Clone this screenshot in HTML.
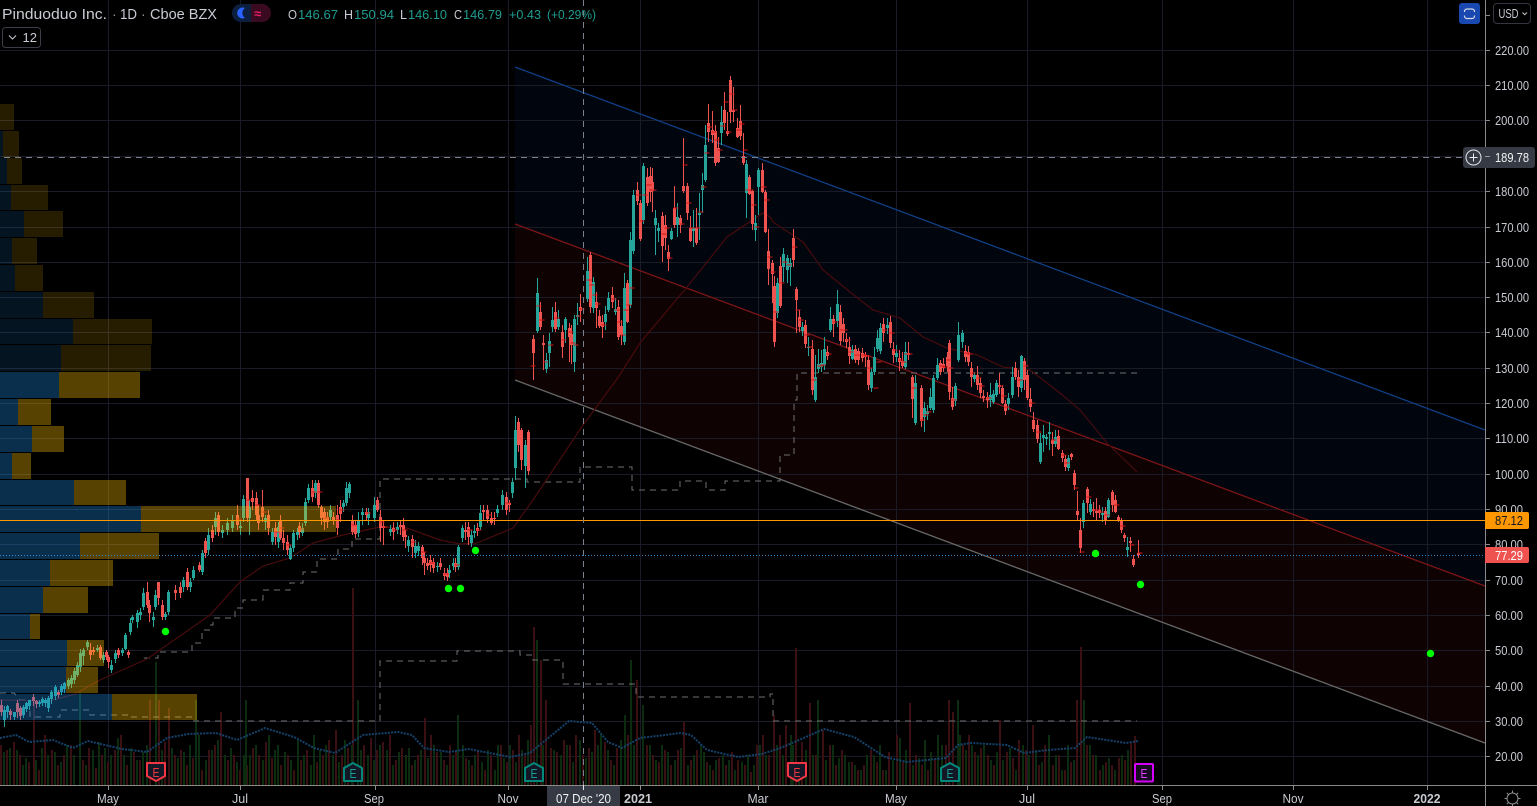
<!DOCTYPE html>
<html><head><meta charset="utf-8"><title>Pinduoduo Inc.</title>
<style>html,body{margin:0;padding:0;background:#000;overflow:hidden}svg{display:block}text{font-family:"Liberation Sans",sans-serif}</style></head>
<body>
<svg xmlns="http://www.w3.org/2000/svg" width="1537" height="806" viewBox="0 0 1537 806">
<rect width="1537" height="806" fill="#000"/>
<polygon points="515,67 1485,430 1485,586 515,224" fill="#01060e"/>
<polygon points="515,224 1485,586 1485,743 515,380" fill="#0f0203"/>
<g stroke="#1a1b26" stroke-width="1" shape-rendering="crispEdges">
<path d="M0 50.5H1485M0 85.5H1485M0 120.5H1485M0 156.5H1485M0 191.5H1485M0 227.5H1485M0 262.5H1485M0 297.5H1485M0 332.5H1485M0 368.5H1485M0 403.5H1485M0 438.5H1485M0 474.5H1485M0 509.5H1485M0 544.5H1485M0 580.5H1485M0 615.5H1485M0 650.5H1485M0 686.5H1485M0 721.5H1485M0 756.5H1485"/>
<path d="M108.5 0V785M240.5 0V785M375.5 0V785M508.5 0V785M640.5 0V785M758.5 0V785M896.5 0V785M1027.5 0V785M1162.5 0V785M1293.5 0V785M1427.5 0V785"/>
</g>
<!-- volume -->
<g transform="translate(1 0)" fill="none" stroke-width="2" shape-rendering="crispEdges">
<path stroke="#3a1012" d="M0 745V785M6 750V785M13 742V785M19 755V785M28 762V785M33 700V785M38 770V785M44 735V785M51 750V785M57 765V785M63 755V785M70 745V785M82 760V785M88 748V785M95 768V785M101 755V785M107 762V785M114 750V785M120 735V785M126 765V785M133 752V785M139 760V785M149 700V785M158 700V785M164 742V785M168 708V785M174 755V785M180 750V785M186 765V785M192 758V785M201 770V785M208 750V785M214 745V785M220 712V785M227 760V785M233 755V785M239 770V785M246 765V785M252 748V785M258 755V785M265 742V785M271 758V785M280 765V785M287 755V785M293 770V785M300 760V785M306 750V785M316 762V785M322 755V785M328 740V785M335 730V785M341 755V785M347 748V785M352 588V785M363 745V785M370 738V785M376 750V785M382 742V785M389 735V785M395 760V785M401 748V785M411 765V785M417 755V785M424 718V785M430 735V785M436 752V785M443 760V785M449 745V785M455 750V785M465 758V785M471 765V785M477 750V785M484 770V785M490 755V785M500 745V785M506 762V785M512 750V785M518 735V785M524 755V785M530 725V785M533 627V785M540 660V785M545 700V785M550 748V785M556 752V785M563 740V785M569 745V785M575 735V785M582 755V785M588 748V785M594 730V785M604 742V785M610 760V785M616 748V785M627 735V785M636 680V785M646 745V785M652 755V785M658 762V785M664 750V785M670 765V785M677 750V785M683 722V785M690 760V785M696 750V785M706 762V785M712 770V785M718 758V785M725 765V785M731 752V785M737 760V785M744 765V785M750 772V785M756 745V785M762 735V785M768 755V785M773 715V785M779 735V785M785 725V785M795 648V785M801 742V785M809 703V785M815 755V785M822 730V785M829 745V785M835 765V785M841 750V785M851 762V785M857 770V785M863 765V785M870 750V785M876 762V785M882 770V785M888 752V785M896 735V785M902 762V785M909 703V785M915 755V785M921 765V785M927 770V785M934 758V785M945 745V785M948 700V785M952 712V785M962 745V785M968 735V785M974 752V785M980 748V785M987 755V785M993 765V785M999 720V785M1006 752V785M1012 758V785M1018 740V785M1025 750V785M1032 725V785M1038 765V785M1044 745V785M1052 765V785M1058 755V785M1064 770V785M1070 762V785M1076 700V785M1080 647V785M1086 745V785M1092 755V785M1099 770V785M1105 762V785M1111 765V785M1118 758V785M1124 760V785M1130 742V785M1134 736V785"/>
<path stroke="#0c2c10" d="M3 752V785M9 748V785M16 750V785M22 765V785M25 758V785M35 760V785M41 748V785M47 755V785M54 752V785M60 762V785M66 745V785M73 755V785M79 693V785M85 765V785M92 750V785M98 742V785M104 748V785M110 755V785M117 738V785M123 755V785M130 748V785M136 760V785M142 752V785M146 745V785M155 662V785M161 750V785M171 748V785M177 758V785M183 752V785M189 745V785M195 700V785M198 735V785M205 760V785M211 750V785M217 740V785M224 755V785M230 748V785M236 762V785M243 755V785M245 700V785M249 755V785M255 745V785M262 760V785M268 735V785M274 750V785M277 745V785M284 752V785M290 760V785M297 740V785M303 755V785M310 765V785M313 735V785M319 750V785M325 745V785M332 755V785M338 762V785M344 740V785M351 745V785M357 700V785M360 750V785M367 755V785M373 760V785M379 745V785M386 750V785M392 765V785M398 752V785M405 755V785M408 748V785M414 760V785M420 750V785M427 758V785M433 745V785M440 752V785M446 765V785M452 755V785M457 715V785M462 745V785M468 760V785M474 755V785M481 762V785M487 750V785M494 770V785M497 745V785M503 758V785M509 745V785M515 762V785M521 750V785M527 740V785M536 640V785M542 745V785M553 750V785M560 755V785M566 745V785M572 762V785M579 740V785M585 758V785M591 752V785M597 745V785M600 735V785M607 750V785M613 765V785M620 740V785M624 715V785M630 660V785M633 745V785M642 705V785M649 745V785M655 760V785M661 745V785M667 752V785M674 760V785M680 748V785M687 765V785M693 755V785M700 745V785M703 752V785M709 765V785M715 760V785M722 755V785M728 760V785M734 770V785M741 762V785M747 755V785M753 765V785M759 745V785M765 755V785M776 745V785M782 755V785M790 735V785M792 745V785M798 765V785M805 750V785M812 755V785M817 700V785M825 760V785M832 745V785M838 758V785M844 755V785M848 762V785M854 765V785M860 770V785M866 755V785M873 755V785M879 745V785M885 770V785M892 760V785M899 738V785M905 750V785M912 765V785M918 758V785M924 740V785M930 752V785M937 735V785M941 745V785M957 700V785M959 735V785M965 750V785M971 745V785M977 755V785M983 745V785M990 760V785M996 752V785M1002 760V785M1009 748V785M1015 770V785M1022 745V785M1028 755V785M1035 750V785M1041 762V785M1048 735V785M1055 755V785M1061 770V785M1067 745V785M1073 760V785M1083 700V785M1089 745V785M1095 755V785M1102 765V785M1108 758V785M1114 770V785M1121 755V785M1127 750V785"/>
</g>
<polyline fill="none" stroke="#14426a" stroke-width="2" stroke-dasharray="2 1.2" points="0,738 16,735 29,742 53,740 73,748 88,741 122,749 147,752 167,738 188,734 216,733 237,740 265,728 294,737 314,748 335,753 363,735 398,732 412,735 424,748 449,752 469,749 510,757 530,753 569,721 592,723 608,742 622,748 640,738 681,733 691,735 707,750 738,757 762,754 783,747 824,729 854,737 885,757 907,762 946,758 958,745 971,743 1007,745 1024,753 1048,750 1075,748 1087,737 1126,743 1138,741"/>
<line x1="515" y1="67" x2="1485" y2="430" stroke="#0f3f85" stroke-width="1.3"/>
<line x1="515" y1="224" x2="1485" y2="586" stroke="#7d1517" stroke-width="1.3"/>
<line x1="515" y1="380" x2="1485" y2="743" stroke="#696969" stroke-width="1.3"/>
<g fill="none" stroke="#707070" stroke-width="1" stroke-dasharray="6 5" shape-rendering="crispEdges">
<path d="M0 693H14L20 700H30V717H60V710H90V715H130V717H192V721H380V661H457V651H520V655H533V660H563V684H636V697H770V694H773V721H1137"/>
<path d="M144 658H158V652H192V643H202V630H210V625H213V618H235V608H243V600H263V590H290V583H303V572H317V559H338V549H352V539H380V479H527V482H580V467H632V490H680V481H706V490H725V481H780V455H794V400H797V373H1137"/>
</g>
<polyline fill="none" stroke="#470b0d" stroke-width="1.2" points="0,700 50,701 75,694 100,680 147,659 210,615 240,582 263,566 290,558 313,543 343,535 380,527 407,528 440,540 460,544 477,543 513,528 533,500 583,425 617,379 640,343 687,287 727,237 763,213 770,217 773,222 803,242 823,270 850,292 873,310 900,318 923,337 947,348 977,355 1003,367 1030,370 1060,393 1080,410 1107,443 1137,472"/>
<!-- candles -->
<g transform="translate(.5 0)" fill="none" shape-rendering="crispEdges">
<path stroke="#26a69a" stroke-width="1" d="M4 706V727M7 705V718M14 712V720M23 705V718M26 702V712M29 700V710M39 700V707M42 697V706M45 698V707M48 696V712M51 690V704M55 685V700M61 684V695M64 682V693M68 678V689M71 675V688M74 668V684M77 662V677M80 649V672M83 648V665M87 640V650M97 645V652M103 652V663M111 660V673M115 650V663M122 648V656M125 633V650M130 618V635M132 615V623M137 610V628M140 608V620M143 588V610M153 612V627M155 590V610M165 612V620M168 590V615M183 577V592M190 578V592M193 566V580M202 550V575M208 528V555M215 512V535M222 525V538M227 518V535M232 515V532M240 520V535M243 495V522M249 500V535M265 515V530M272 528V545M278 522V548M290 545V560M293 530V552M297 528V540M302 523V536M305 498V526M308 484V503M315 480V498M330 505V520M343 500V512M346 482V506M349 482V498M358 512V537M362 508V525M368 508V525M374 497V522M390 525V536M397 522V534M408 536V552M415 540V558M418 542V556M437 562V572M449 565V578M453 558V570M458 545V570M462 525V542M471 530V547M474 525V538M480 505V530M497 505V517M502 490V510M512 478V498M515 416V480M525 440V488M537 278V333M546 353V373M549 333V367M552 307V332M558 310V330M565 317V343M574 315V372M577 303V325M587 257V302M593 277V313M605 306V330M608 292V312M615 298V315M624 273V345M630 232V308M633 190V254M643 163V224M655 210V255M658 223V242M671 228V240M677 203V237M693 210V247M699 193V240M702 173V213M705 125V182M721 106V145M746 160V218M755 215V241M758 168V215M777 278V318M783 248V282M787 255V283M790 258V286M802 322V336M808 337V356M815 355V402M818 349V373M821 350V372M824 337V370M830 307V332M837 290V327M852 345V360M871 368V392M874 347V375M877 330V352M880 323V354M887 318V334M896 345V362M905 342V369M915 375V425M924 402V432M927 405V420M930 388V410M933 375V413M937 358V380M955 383V406M958 322V362M962 330V348M974 372V382M990 383V407M993 390V404M996 380V397M1008 393V410M1012 367V398M1021 355V392M1040 433V464M1043 425V452M1046 434V445M1049 422V450M1055 430V447M1068 455V471M1083 500V528M1090 499V515M1102 507V522M1108 498V518M1127 537V557"/>
<path stroke="#26a69a" stroke-width="3" d="M4 710V720M7 706V712M14 712V717M23 707V715M26 703V709M29 700V706M39 702V704M42 699V703M45 700V703M48 698V708M51 692V699M55 687V696M61 686V692M64 683V689M68 680V686M71 678V684M74 671V680M77 665V675M80 653V667M83 650V656M87 642V647M97 648V650M103 655V660M111 665V670M115 653V659M122 650V653M125 635V649M130 623V632M132 617V620M137 613V622M140 612V615M143 593V607M153 617V620M155 595V607M165 614V617M168 592V612M183 580V587M190 582V587M193 570V578M202 553V572M208 535V550M215 518V527M222 530V533M227 523V530M232 520V528M240 526V528M243 499V518M249 507V518M265 518V522M272 532V542M278 527V542M290 548V559M293 533V548M297 532V535M302 528V533M305 502V523M308 488V500M315 483V493M330 510V517M343 503V507M346 488V503M349 484V493M358 520V533M362 512V515M368 512V518M374 505V518M390 529V532M397 527V530M408 540V546M415 546V553M418 546V551M437 566V567M449 570V573M453 563V566M458 547V567M462 528V538M471 535V543M474 531V533M480 513V527M497 509V513M502 495V505M512 482V493M515 430V468M525 445V466M537 293V331M546 360V369M549 341V353M552 320V327M558 319V327M565 319V330M574 319V362M577 315V317M587 271V299M593 282V308M605 314V322M608 298V310M615 309V312M624 288V342M630 240V305M633 195V251M643 166V220M655 218V225M658 228V231M671 231V239M677 217V225M693 228V231M699 213V215M702 185V190M705 145V180M721 122V133M746 164V193M755 223V230M758 170V187M777 283V313M783 254V267M787 258V270M790 263V267M802 327V331M808 347V348M815 377V400M818 364V369M821 363V367M824 349V365M830 319V330M837 304V321M852 350V359M871 372V388M874 357V372M877 338V349M880 328V351M887 325V328M896 353V357M905 352V367M915 383V423M924 408V417M927 411V414M930 397V408M933 378V410M937 365V378M955 386V401M958 335V360M962 333V342M974 375V379M990 395V400M993 394V402M996 383V395M1008 398V404M1012 377V395M1021 356V388M1040 443V462M1043 435V438M1046 437V439M1049 432V434M1055 437V444M1068 458V468M1083 503V522M1090 504V512M1102 513V515M1108 500V517M1127 547V550"/>
<path stroke="#ef5350" stroke-width="1" d="M1 700V716M10 709V720M17 700V718M20 706V720M33 694V706M36 700V708M58 690V698M90 643V660M93 647V655M100 645V660M106 650V660M108 655V668M118 648V658M128 650V658M147 582V608M149 600V622M158 582V605M162 600V620M175 585V600M180 582V598M187 568V590M199 562V572M205 538V558M212 525V542M218 512V536M237 505V530M247 478V522M252 490V510M256 492V520M258 505V530M262 490V522M268 510V535M275 522V545M280 515V540M283 530V550M287 535V555M299 522V538M312 480V502M318 480V508M321 505V525M324 508V530M327 512V528M333 512V525M337 505V535M340 500V522M352 515V535M355 520V538M366 508V520M377 497V512M380 510V542M383 520V545M393 522V540M400 520V535M403 518V541M405 530V548M412 535V558M422 545V565M424 552V575M427 558V570M430 555V572M433 558V573M440 558V570M444 568V580M447 568V581M455 558V572M465 522V540M468 522V545M477 523V536M483 505V520M487 505V523M491 512V525M494 512V525M506 492V515M509 500V512M518 418V452M521 428V470M528 430V475M533 335V380M540 302V330M543 335V370M555 302V332M562 325V358M569 323V362M571 325V364M580 294V322M590 252V313M596 292V328M599 310V328M602 315V338M612 287V308M618 300V340M621 320V345M627 280V323M637 182V205M640 200V241M647 168V206M650 167V202M652 168V212M662 212V262M665 215V250M668 245V271M674 186V228M680 215V233M683 138V193M687 183V220M690 216V242M696 208V245M708 104V142M712 111V143M715 125V166M718 137V163M724 92V130M727 112V136M730 76V123M733 87V122M737 118V138M740 105V140M743 133V165M749 175V195M752 190V230M762 163V193M765 190V233M768 229V285M772 260V303M774 276V347M780 257V308M793 229V267M796 287V333M799 310V332M805 320V348M812 340V395M827 346V360M833 315V337M840 305V345M843 318V342M846 333V348M849 337V364M855 345V363M858 348V365M862 348V362M865 352V367M868 355V390M883 318V342M890 316V348M893 342V363M899 350V371M902 352V368M908 342V360M912 375V418M921 385V427M940 360V375M943 358V372M947 352V372M949 340V400M952 387V410M965 345V362M968 346V366M971 362V387M977 366V390M980 378V398M983 390V402M987 392V408M999 373V394M1002 385V404M1005 400V415M1015 362V380M1018 370V397M1024 358V390M1027 370V400M1030 388V412M1033 412V432M1037 420V443M1052 432V456M1058 430V450M1062 450V462M1065 455V471M1071 453V460M1074 470V490M1077 491V520M1080 518V553M1087 487V513M1093 502V517M1096 498V520M1099 505V518M1105 507V525M1112 490V512M1115 495V513M1118 515V522M1121 518V533M1124 533V542M1130 537V552M1133 555V567M1138 540V558"/>
<path stroke="#ef5350" stroke-width="3" d="M1 705V712M10 711V715M17 703V712M20 708V716M33 697V701M36 701V704M58 692V695M90 650V655M93 650V652M100 647V658M106 652V657M108 657V662M118 650V655M128 652V655M147 592V605M149 605V613M158 582V598M162 605V617M175 590V593M180 587V593M187 572V587M199 565V570M205 541V553M212 530V538M218 515V532M237 515V525M247 478V518M252 498V502M256 498V515M258 515V523M262 507V517M268 515V528M275 528V537M280 520V538M283 538V543M287 542V550M299 526V532M312 488V497M318 483V505M321 507V518M324 512V522M327 517V522M333 517V520M337 515V528M340 507V514M352 520V532M355 525V534M366 512V515M377 500V510M380 517V528M383 526V528M393 528V532M400 525V527M403 525V537M405 535V537M412 539V547M422 547V558M424 558V563M427 563V566M430 560V565M433 562V568M440 563V567M444 573V576M447 573V577M455 563V567M465 530V532M468 527V537M477 528V531M483 510V512M487 510V519M491 518V523M494 518V519M506 497V510M509 503V505M518 422V445M521 430V460M528 432V471M533 339V353M540 312V327M543 343V345M555 312V329M562 332V347M569 328V337M571 334V345M580 307V311M590 255V307M596 302V308M599 316V326M602 322V327M612 295V302M618 307V337M621 326V335M627 283V322M637 190V201M640 203V239M647 177V203M650 176V192M652 182V191M662 216V246M665 225V238M668 252V259M674 208V225M680 218V225M683 186V191M687 186V213M690 228V241M696 228V243M708 123V132M712 130V135M715 131V163M718 148V162M724 110V123M727 131V134M730 80V112M733 110V112M737 128V137M740 121V136M743 156V163M749 177V194M752 191V224M762 170V192M765 192V232M768 251V269M772 263V274M774 286V342M780 266V306M793 238V260M796 289V300M799 317V327M805 325V344M812 349V390M827 352V356M833 319V324M840 312V341M843 324V333M846 339V342M849 347V356M855 349V360M858 351V360M862 353V358M865 355V357M868 360V385M883 324V333M890 322V343M893 349V355M899 358V362M902 361V366M908 353V355M912 377V399M921 388V421M940 363V372M943 364V368M947 357V366M949 343V392M952 398V407M965 351V357M968 352V362M971 368V377M977 375V385M980 383V393M983 396V398M987 397V400M999 385V387M1002 388V403M1005 404V411M1015 368V377M1018 377V387M1024 361V380M1027 375V398M1030 399V407M1033 420V429M1037 425V439M1052 440V444M1058 436V449M1062 453V458M1065 459V467M1071 454V457M1074 473V485M1077 511V515M1080 530V548M1087 489V503M1093 509V511M1096 511V513M1099 510V513M1105 511V520M1112 492V505M1115 500V512M1118 517V520M1121 520V530M1124 535V538M1130 541V543M1133 559V565M1138 553V555"/>
<path stroke="#d41414" stroke-width="1" d="M236 519h5M246 500h5M255 505h5M261 512h5M274 532h5M279 528h5M286 545h5M298 529h5M311 492h5M317 492h5M323 518h5M336 520h5M339 510h5M351 525h5M365 513h5M379 522h5M382 527h5M392 530h5M402 530h5M411 542h5M421 552h5M429 563h5M443 574h5M454 565h5M467 530h5M476 530h5M486 515h5M505 503h5M530 366h5M536 306h5M539 320h5M542 362h5M548 345h5M554 318h5M561 340h5M568 332h5M570 343h5M573 345h5M576 316h5M579 309h5M586 280h5M589 285h5M592 295h5M595 304h5M601 325h5M611 299h5M614 310h5M617 322h5M620 335h5M623 310h5M626 305h5M629 288h5M636 195h5M639 221h5M642 195h5M646 185h5M649 190h5M651 190h5M661 234h5M664 228h5M667 258h5M673 208h5M679 224h5M682 165h5M686 203h5M689 228h5M695 228h5M698 212h5M701 187h5M704 153h5M707 127h5M711 132h5M714 140h5M717 150h5M720 126h5M723 102h5M726 132h5M729 94h5M732 110h5M736 130h5M739 124h5M742 150h5M745 190h5M748 190h5M751 205h5M754 227h5M761 187h5M764 200h5M767 257h5M770 272h5M773 312h5M779 283h5M782 262h5M786 265h5M792 247h5M795 310h5M798 320h5M804 335h5M807 347h5M811 380h5M817 366h5M820 365h5M826 354h5M832 322h5M839 330h5M842 330h5M845 340h5M848 352h5M854 355h5M861 355h5M864 356h5M867 368h5M873 388h5M876 362h5M882 330h5M889 333h5M892 350h5M898 360h5M901 362h5M904 354h5M907 354h5M911 388h5M920 420h5M923 415h5M926 412h5M939 366h5M942 367h5M946 360h5M948 368h5M951 400h5M964 353h5M967 354h5M970 373h5M976 378h5M979 386h5M986 398h5M998 386h5M1001 396h5M1004 407h5M1017 380h5M1023 366h5M1029 403h5M1036 432h5M1051 440h5M1061 455h5M1064 463h5M1073 488h5M1079 552h5M1086 497h5M1092 510h5M1095 510h5M1098 512h5M1104 515h5M1114 505h5M1120 526h5M1129 545h5M1137 553h5"/>
</g>
<!-- volume profile -->
<g shape-rendering="crispEdges">
<g fill="#1e8fe6" fill-opacity=".14">
<rect x="0" y="131" width="3" height="26"/><rect x="0" y="158" width="7" height="26"/><rect x="0" y="185" width="11" height="25"/><rect x="0" y="211" width="24" height="26"/><rect x="0" y="238" width="12" height="26"/><rect x="0" y="265" width="15" height="26"/><rect x="0" y="292" width="43" height="26"/><rect x="0" y="319" width="73" height="25"/><rect x="0" y="345" width="61" height="26"/>
</g>
<g fill="#ffc107" fill-opacity=".15">
<rect x="0" y="104" width="14" height="26"/><rect x="3" y="131" width="16" height="26"/><rect x="7" y="158" width="15" height="26"/><rect x="11" y="185" width="37" height="25"/><rect x="24" y="211" width="39" height="26"/><rect x="12" y="238" width="25" height="26"/><rect x="15" y="265" width="28" height="26"/><rect x="43" y="292" width="51" height="26"/><rect x="73" y="319" width="79" height="25"/><rect x="61" y="345" width="90" height="26"/>
</g>
<g fill="#1e8fe6" fill-opacity=".33">
<rect x="0" y="372" width="59" height="26"/><rect x="0" y="399" width="18" height="26"/><rect x="0" y="426" width="32" height="26"/><rect x="0" y="453" width="12" height="26"/><rect x="0" y="480" width="74" height="25"/><rect x="0" y="506" width="141" height="26"/><rect x="0" y="533" width="80" height="26"/><rect x="0" y="560" width="50" height="26"/><rect x="0" y="587" width="43" height="26"/><rect x="0" y="614" width="30" height="25"/><rect x="0" y="640" width="67" height="26"/><rect x="0" y="667" width="66" height="26"/><rect x="0" y="694" width="112" height="26"/>
</g>
<g fill="#ffc107" fill-opacity=".34">
<rect x="59" y="372" width="81" height="26"/><rect x="18" y="399" width="33" height="26"/><rect x="32" y="426" width="32" height="26"/><rect x="12" y="453" width="19" height="26"/><rect x="74" y="480" width="52" height="25"/><rect x="141" y="506" width="195" height="26"/><rect x="80" y="533" width="79" height="26"/><rect x="50" y="560" width="63" height="26"/><rect x="43" y="587" width="45" height="26"/><rect x="30" y="614" width="10" height="25"/><rect x="67" y="640" width="37" height="26"/><rect x="66" y="667" width="32" height="26"/><rect x="112" y="694" width="85" height="26"/>
</g>
</g>
<line x1="0" y1="520.5" x2="1485" y2="520.5" stroke="#ff9800" stroke-width="1"/>
<line x1="0" y1="555.5" x2="1485" y2="555.5" stroke="#2f88cc" stroke-width="1" stroke-dasharray="1 2"/>
<g fill="#00ff00">
<circle cx="165.5" cy="631.5" r="3.7"/><circle cx="448.5" cy="588.5" r="3.7"/><circle cx="460.5" cy="588.5" r="3.7"/><circle cx="475.5" cy="550.5" r="3.7"/><circle cx="1095.5" cy="553.5" r="3.7"/><circle cx="1140.5" cy="584.5" r="3.7"/><circle cx="1430.5" cy="653.5" r="3.7"/>
</g>
<g fill="none" stroke="#7b818c" stroke-width="1" stroke-dasharray="6 5" shape-rendering="crispEdges">
<path d="M4 157.5H1463"/><path d="M583.5 0V785"/>
</g>
<!-- earnings badges -->
<g stroke-width="2" fill="#141826" stroke-linejoin="round">
<path d="M147 763H165V776L156 781L147 776Z" stroke="#f23645"/>
<path d="M344 768L353 763L362 768V781H344Z" stroke="#00897b"/>
<path d="M525 768L534 763L543 768V781H525Z" stroke="#00897b"/>
<path d="M788 763H806V776L797 781L788 776Z" stroke="#f23645"/>
<path d="M941 768L950 763L959 768V781H941Z" stroke="#00897b"/>
<rect x="1135" y="764" width="18" height="17.5" rx="1" stroke="#d500f9" fill="#1a0b24"/>
</g>
<g font-size="13" text-anchor="middle">
<text x="156" y="777" fill="#f23645" textLength="7" lengthAdjust="spacingAndGlyphs">E</text><text x="353" y="778" fill="#14a090" textLength="7" lengthAdjust="spacingAndGlyphs">E</text><text x="534" y="778" fill="#14a090" textLength="7" lengthAdjust="spacingAndGlyphs">E</text><text x="797" y="777" fill="#f23645" textLength="7" lengthAdjust="spacingAndGlyphs">E</text><text x="950" y="778" fill="#14a090" textLength="7" lengthAdjust="spacingAndGlyphs">E</text><text x="1144" y="778" fill="#e040fb" textLength="7" lengthAdjust="spacingAndGlyphs">E</text>
</g>
<!-- axes -->
<rect x="1486" y="0" width="51" height="806" fill="#000"/>
<rect x="0" y="786" width="1537" height="20" fill="#000"/>
<g stroke="#8a8a8a" stroke-width="1" shape-rendering="crispEdges">
<path d="M1485.5 0V806M0 785.5H1537"/>
<path d="M1485 15.5H1490M1485 50.5H1490M1485 85.5H1490M1485 120.5H1490M1485 156.5H1490M1485 191.5H1490M1485 227.5H1490M1485 262.5H1490M1485 297.5H1490M1485 332.5H1490M1485 368.5H1490M1485 403.5H1490M1485 438.5H1490M1485 474.5H1490M1485 509.5H1490M1485 544.5H1490M1485 580.5H1490M1485 615.5H1490M1485 650.5H1490M1485 686.5H1490M1485 721.5H1490M1485 756.5H1490"/>
<path d="M108.5 785V790M240.5 785V790M375.5 785V790M508.5 785V790M640.5 785V790M758.5 785V790M896.5 785V790M1027.5 785V790M1162.5 785V790M1293.5 785V790M1427.5 785V790"/>
</g>
<g font-size="13" fill="#c9cbd2">
<text x="1495" y="55" textLength="34" lengthAdjust="spacingAndGlyphs">220.00</text>
<text x="1495" y="90" textLength="34" lengthAdjust="spacingAndGlyphs">210.00</text>
<text x="1495" y="125" textLength="34" lengthAdjust="spacingAndGlyphs">200.00</text>
<text x="1495" y="196" textLength="34" lengthAdjust="spacingAndGlyphs">180.00</text>
<text x="1495" y="232" textLength="34" lengthAdjust="spacingAndGlyphs">170.00</text>
<text x="1495" y="267" textLength="34" lengthAdjust="spacingAndGlyphs">160.00</text>
<text x="1495" y="302" textLength="34" lengthAdjust="spacingAndGlyphs">150.00</text>
<text x="1495" y="337" textLength="34" lengthAdjust="spacingAndGlyphs">140.00</text>
<text x="1495" y="373" textLength="34" lengthAdjust="spacingAndGlyphs">130.00</text>
<text x="1495" y="408" textLength="34" lengthAdjust="spacingAndGlyphs">120.00</text>
<text x="1495" y="443" textLength="34" lengthAdjust="spacingAndGlyphs">110.00</text>
<text x="1495" y="479" textLength="34" lengthAdjust="spacingAndGlyphs">100.00</text>
<text x="1495" y="514" textLength="28" lengthAdjust="spacingAndGlyphs">90.00</text>
<text x="1495" y="549" textLength="28" lengthAdjust="spacingAndGlyphs">80.00</text>
<text x="1495" y="585" textLength="28" lengthAdjust="spacingAndGlyphs">70.00</text>
<text x="1495" y="620" textLength="28" lengthAdjust="spacingAndGlyphs">60.00</text>
<text x="1495" y="655" textLength="28" lengthAdjust="spacingAndGlyphs">50.00</text>
<text x="1495" y="691" textLength="28" lengthAdjust="spacingAndGlyphs">40.00</text>
<text x="1495" y="726" textLength="28" lengthAdjust="spacingAndGlyphs">30.00</text>
<text x="1495" y="761" textLength="28" lengthAdjust="spacingAndGlyphs">20.00</text>
</g>
<!-- price labels -->
<rect x="1463" y="147" width="72" height="21" rx="3" fill="#363a45"/>
<circle cx="1473.5" cy="157.5" r="7.5" fill="none" stroke="#eceef2" stroke-width="1"/>
<path d="M1469.5 157.5H1477.5M1473.5 153.5V161.5" stroke="#eceef2" stroke-width="1"/>
<path d="M1485 156.5H1490" stroke="#9a9a9a"/>
<text x="1495" y="162" font-size="13" fill="#f2f3f5" textLength="34" lengthAdjust="spacingAndGlyphs">189.78</text>
<path d="M1485 512H1527a2 2 0 0 1 2 2V527a2 2 0 0 1-2 2H1485Z" fill="#ff9800"/>
<text x="1495" y="525" font-size="13" fill="#131722" textLength="28" lengthAdjust="spacingAndGlyphs">87.12</text>
<path d="M1485 547H1527a2 2 0 0 1 2 2V561a2 2 0 0 1-2 2H1485Z" fill="#ef5350"/>
<text x="1495" y="560" font-size="13" fill="#ffffff" textLength="28" lengthAdjust="spacingAndGlyphs">77.29</text>
<!-- time axis -->
<g font-size="13" fill="#c9cbd2" text-anchor="middle">
<text x="108" y="803" textLength="22" lengthAdjust="spacingAndGlyphs">May</text>
<text x="240" y="803" textLength="16" lengthAdjust="spacingAndGlyphs">Jul</text>
<text x="374" y="803" textLength="20" lengthAdjust="spacingAndGlyphs">Sep</text>
<text x="508" y="803" textLength="21" lengthAdjust="spacingAndGlyphs">Nov</text>
<text x="638" y="803" font-weight="bold" textLength="28" lengthAdjust="spacingAndGlyphs">2021</text>
<text x="758" y="803" textLength="21" lengthAdjust="spacingAndGlyphs">Mar</text>
<text x="896" y="803" textLength="22" lengthAdjust="spacingAndGlyphs">May</text>
<text x="1027" y="803" textLength="16" lengthAdjust="spacingAndGlyphs">Jul</text>
<text x="1162" y="803" textLength="20" lengthAdjust="spacingAndGlyphs">Sep</text>
<text x="1293" y="803" textLength="21" lengthAdjust="spacingAndGlyphs">Nov</text>
<text x="1427" y="803" font-weight="bold" textLength="27" lengthAdjust="spacingAndGlyphs">2022</text>
</g>
<rect x="547" y="786" width="73" height="20" fill="#363a45"/>
<text x="583.5" y="803" font-size="13" fill="#f0f1f3" text-anchor="middle" textLength="55" lengthAdjust="spacingAndGlyphs">07 Dec '20</text>
<path d="M583.5 785V790" stroke="#e0e3ea"/>
<!-- gear -->
<g fill="none" stroke="#8e8e8e" stroke-width="1">
<circle cx="1512.5" cy="798.5" r="5.5"/>
<path d="M1512.5 790.5V793M1512.5 804V806M1504.5 798.5H1507M1518 798.5H1520.5M1506.8 792.8L1508.6 794.6M1516.4 794.6L1518.2 792.8M1506.8 804.2L1508.6 802.4M1516.4 802.4L1518.2 804.2"/>
</g>
<!-- blue button -->
<rect x="1459" y="3" width="21" height="21" rx="3" fill="#1848b0"/>
<path d="M1464.5 12V11.5a2.5 2.5 0 0 1 2.5-2.500H1472a2.500 2.500 0 0 1 2.500 2.500V12M1464.5 15.5V16a2.500 2.500 0 0 0 2.500 2.500H1472a2.500 2.500 0 0 0 2.500-2.500V15.5" fill="none" stroke="#d5d9e6" stroke-width="1.2"/>
<rect x="1493.5" y="3.5" width="37" height="20" rx="3.5" fill="#000" stroke="#33363f"/>
<text x="1498.5" y="18" font-size="13" fill="#c9cbd2" textLength="20" lengthAdjust="spacingAndGlyphs">USD</text>
<path d="M1522.5 12.5L1524.7 14.7L1527 12.5" fill="none" stroke="#c9cbd2"/>
<!-- header -->
<text x="2" y="19" font-size="15" fill="#c9ccd4" textLength="105" lengthAdjust="spacingAndGlyphs">Pinduoduo Inc.</text>
<text x="112" y="19" font-size="14" fill="#8e9199">·</text>
<text x="120" y="19" font-size="15" fill="#c9ccd4" textLength="17" lengthAdjust="spacingAndGlyphs">1D</text>
<text x="141" y="19" font-size="14" fill="#8e9199">·</text>
<text x="150" y="19" font-size="15" fill="#c9ccd4" textLength="67" lengthAdjust="spacingAndGlyphs">Cboe BZX</text>
<path d="M251 4H241a9 9 0 0 0 0 18H251Z" fill="#0c1f3f"/>
<path d="M251 4H262a9 9 0 0 1 0 18H251Z" fill="#3a0b20"/>
<path d="M245 8a5.5 5.5 0 1 0 0 10a6 6 0 0 1 0-10Z" fill="#2962ff"/>
<text x="254" y="18" font-size="13" font-weight="bold" fill="#e91e63">≈</text>
<g font-size="13">
<text x="288" y="19" fill="#c9ccd4" textLength="9" lengthAdjust="spacingAndGlyphs">O</text><text x="298" y="19" fill="#1f9c8f" textLength="40" lengthAdjust="spacingAndGlyphs">146.67</text>
<text x="344" y="19" fill="#c9ccd4" textLength="9" lengthAdjust="spacingAndGlyphs">H</text><text x="354" y="19" fill="#1f9c8f" textLength="40" lengthAdjust="spacingAndGlyphs">150.94</text>
<text x="400" y="19" fill="#c9ccd4" textLength="7" lengthAdjust="spacingAndGlyphs">L</text><text x="408" y="19" fill="#1f9c8f" textLength="39" lengthAdjust="spacingAndGlyphs">146.10</text>
<text x="454" y="19" fill="#c9ccd4" textLength="8" lengthAdjust="spacingAndGlyphs">C</text><text x="463" y="19" fill="#1f9c8f" textLength="39" lengthAdjust="spacingAndGlyphs">146.79</text>
<text x="509" y="19" fill="#1f9c8f" textLength="32" lengthAdjust="spacingAndGlyphs">+0.43</text>
<text x="547" y="19" fill="#1f9c8f" textLength="49" lengthAdjust="spacingAndGlyphs">(+0.29%)</text>
</g>
<rect x="2.5" y="27.5" width="38" height="20" rx="3" fill="#000" stroke="#3a3d46"/>
<path d="M9 35.5L12.5 39L16 35.5" fill="none" stroke="#c9ccd4"/>
<text x="22.5" y="42" font-size="13" fill="#c9ccd4">12</text>
</svg>
</body></html>
